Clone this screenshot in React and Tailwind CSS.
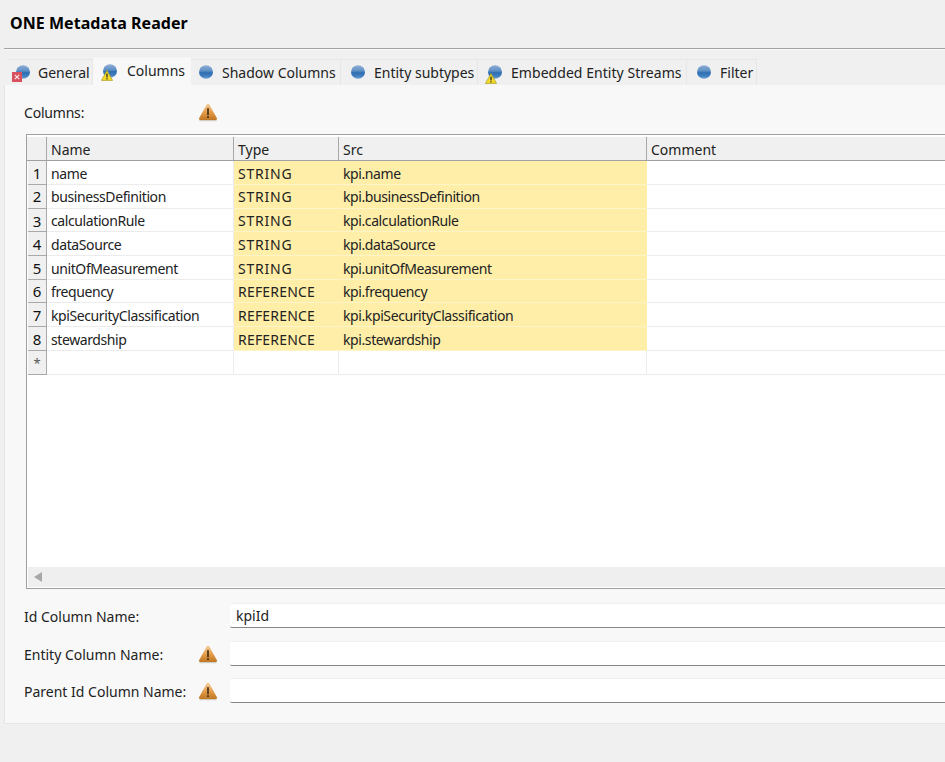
import React from 'react';

function Sphere({ className = '', id }) {
  return (
    <svg width="16" height="16" viewBox="0 0 16 16" className={className}>
      <defs>
        <linearGradient id={id} x1="0" y1="0" x2="0" y2="1">
          <stop offset="0" stopColor="#8fb0d6" />
          <stop offset="0.42" stopColor="#5f8fc4" />
          <stop offset="0.55" stopColor="#2f6fb2" />
          <stop offset="0.8" stopColor="#3f7fc0" />
          <stop offset="1" stopColor="#72a2d4" />
        </linearGradient>
      </defs>
      <ellipse cx="8" cy="8" rx="7" ry="6.7" fill={`url(#${id})`} />
    </svg>
  );
}

function TinyWarn({ className = '' }) {
  return (
    <svg width="12" height="11" viewBox="0 0 12 11" className={className}>
      <path d="M6 0.6 L11.6 10.4 H0.4 Z" fill="#f5dc2a" stroke="#a89a20" strokeWidth="0.7" />
      <rect x="5.4" y="3.6" width="1.2" height="3.8" fill="#222" />
      <rect x="5.4" y="8.2" width="1.2" height="1.2" fill="#222" />
    </svg>
  );
}

function TinyError({ className = '' }) {
  return (
    <svg width="10" height="10" viewBox="0 0 10 10" className={className}>
      <rect width="10" height="10" fill="#d8505e" />
      <path d="M2.8 2.8 L7.2 7.2 M7.2 2.8 L2.8 7.2" stroke="#fbe6e8" strokeWidth="1.2" />
    </svg>
  );
}

function Warn({ id }) {
  return (
    <svg width="20" height="19" viewBox="0 0 20 19" className="block">
      <defs>
        <linearGradient id={id} x1="0" y1="0" x2="0" y2="1">
          <stop offset="0" stopColor="#f4cd96" />
          <stop offset="0.55" stopColor="#e39a48" />
          <stop offset="1" stopColor="#bd7624" />
        </linearGradient>
      </defs>
      <path d="M10 0.8 C10.8 0.8 11.2 1.4 11.6 2.1 L18.8 15 C19.4 16.2 18.8 17 17.6 17 H2.4 C1.2 17 0.6 16.2 1.2 15 L8.4 2.1 C8.8 1.4 9.2 0.8 10 0.8 Z" fill={`url(#${id})`} />
      <rect x="1.5" y="17" width="17" height="1.2" fill="#b8b0a4" opacity="0.6" />
      <rect x="9.2" y="5.2" width="1.6" height="7" fill="#3a2a14" />
      <rect x="9.2" y="13.2" width="1.6" height="1.8" fill="#3a2a14" />
    </svg>
  );
}

const tabs = [
  { label: 'General', w: 'w-[85px] ml-[2px]', text: 'pl-[30px]', sphere: 'left-[7px] top-[4px]', badge: 'error', badgePos: 'left-[4px] top-[12px]' },
  { label: 'Columns', w: 'w-[98px]', text: 'pl-[34px]', sphere: 'left-[9px] top-[5px]', badge: 'warn', badgePos: 'left-[8px] top-[12px]', active: true },
  { label: 'Shadow Columns', w: 'w-[150px]', text: 'pl-[31px]', sphere: 'left-[7px] top-[4px]' },
  { label: 'Entity subtypes', w: 'w-[137px]', text: 'pl-[33px]', sphere: 'left-[9px] top-[4px]' },
  { label: 'Embedded Entity Streams', w: 'w-[209px]', text: 'pl-[33px] tracking-[0.05px]', sphere: 'left-[9px] top-[4px]', badge: 'warn', badgePos: 'left-[7px] top-[13px]' },
  { label: 'Filter', w: 'w-[70px]', text: 'pl-[33px]', sphere: 'left-[9px] top-[4px]' },
];

const rows = [
  ['name', 'STRING', 'kpi.name', 'h-[24px] leading-[25px]', 'tracking-[0.8px]'],
  ['businessDefinition', 'STRING', 'kpi.businessDefinition', 'h-[24px] leading-[23px]', 'tracking-[0.8px]'],
  ['calculationRule', 'STRING', 'kpi.calculationRule', 'h-[23px] leading-[24px]', 'tracking-[0.8px]'],
  ['dataSource', 'STRING', 'kpi.dataSource', 'h-[24px] leading-[25px]', 'tracking-[0.8px]'],
  ['unitOfMeasurement', 'STRING', 'kpi.unitOfMeasurement', 'h-[24px] leading-[25px]', 'tracking-[0.8px]'],
  ['frequency', 'REFERENCE', 'kpi.frequency', 'h-[23px] leading-[23px]', 'tracking-[0.2px]'],
  ['kpiSecurityClassification', 'REFERENCE', 'kpi.kpiSecurityClassification', 'h-[24px] leading-[25px]', 'tracking-[0.2px]'],
  ['stewardship', 'REFERENCE', 'kpi.stewardship', 'h-[24px] leading-[25px]', 'tracking-[0.2px]'],
];

function Tab({ tab, index }) {
  return (
    <div
      className={`relative flex items-center ${tab.w} ${tab.text} ${
        tab.active ? 'h-[28px] bg-[#f8f8f8] border-t border-[#f4f4f4] pb-[3px]' : 'h-[26px] bg-[#f0f0f0] border-t border-r border-[#e6e6e6]'
      }`}
    >
      <Sphere id={`sphere-${index}`} className={`absolute ${tab.sphere}`} />
      {tab.badge === 'error' && <TinyError className={`absolute ${tab.badgePos}`} />}
      {tab.badge === 'warn' && <TinyWarn className={`absolute ${tab.badgePos}`} />}
      <span className="whitespace-nowrap">{tab.label}</span>
    </div>
  );
}

function FormRow({ label, value, warn, id, mb }) {
  return (
    <div className={`flex h-[25px] ${mb}`}>
      <div className="w-[174px] leading-[27px] whitespace-nowrap">{label}</div>
      <div className="w-[32px] pt-[4px]">{warn && <Warn id={id} />}</div>
      <div className="flex-1 h-[25px] bg-white border-t border-t-[#f0f0f0] border-b border-b-[#868686] rounded-l-[2px] pl-[6px] leading-[23px]">{value}</div>
    </div>
  );
}

export default function App() {
  return (
    <div className="relative w-[945px] h-[762px] overflow-hidden bg-[#f0f0f0] text-[14px] text-[#222] font-['Noto_Sans',sans-serif]">
      <div className="h-[48px] pl-[10px] pt-[11px] text-[16px] leading-[24px] font-bold text-black tracking-[0.05px]">ONE Metadata Reader</div>
      <div className="ml-[4px] h-[1px] bg-[#a3a3a3]" />
      <div className="ml-[4px] h-[1px] bg-[#fafafa]" />

      <div className="flex items-end mt-[7px] pl-[6px] h-[28px]">
        {tabs.map((t, i) => (
          <Tab key={t.label} tab={t} index={i} />
        ))}
      </div>

      <div className="ml-[4px] w-[960px] h-[639px] bg-[#f8f8f8] border-l border-b border-[#e6e6e6] pl-[19px]">
        <div className="flex h-[49px]">
          <div className="w-[174px] pt-[18px] leading-[20px] tracking-[-0.2px]">Columns:</div>
          <div className="pt-[18px]"><Warn id="warn-columns" /></div>
        </div>

        <div className="ml-[2px] h-[455px] border border-[#a0a0a0] bg-white flex flex-col">
          <div className="flex h-[24px] mt-[2px] bg-[#f0f0f0] border-b border-[#a0a0a0] leading-[25px]">
            <div className="w-[19px] ml-[1px] border-r border-[#a9a9a9]" />
            <div className="w-[187px] pl-[4px] border-r border-[#a9a9a9]">Name</div>
            <div className="w-[105px] pl-[4px] border-r border-[#a9a9a9]">Type</div>
            <div className="w-[308px] pl-[4px] border-r border-[#a9a9a9]">Src</div>
            <div className="flex-1 pl-[4px]">Comment</div>
          </div>

          {rows.map((r, i) => (
            <div key={r[0]} className={`flex ${r[3]}`}>
              <div className="w-[19px] ml-[1px] bg-[#f0f0f0] border-r border-b border-[#a9a9a9] text-center text-[15px] text-[#111]">{i + 1}</div>
              <div className="w-[187px] pl-[4px] border-r border-b border-[#ececec] whitespace-nowrap tracking-[-0.4px]">{r[0]}</div>
              <div className={`w-[105px] pl-[4px] bg-[#ffeea8] border-b border-[#fff4c8] whitespace-nowrap ${r[4]}`}>{r[1]}</div>
              <div className="w-[308px] pl-[4px] bg-[#ffeea8] border-b border-[#fff4c8] whitespace-nowrap tracking-[-0.4px]">{r[2]}</div>
              <div className="flex-1 border-b border-[#ececec]" />
            </div>
          ))}
          <div className="flex h-[24px] leading-[24px]">
            <div className="w-[19px] ml-[1px] bg-[#f0f0f0] border-r border-b border-[#a9a9a9] text-center text-[13px] text-[#555]">*</div>
            <div className="w-[187px] border-r border-b border-[#ececec]" />
            <div className="w-[105px] border-r border-b border-[#ececec]" />
            <div className="w-[308px] border-r border-b border-[#ececec]" />
            <div className="flex-1 border-b border-[#ececec]" />
          </div>

          <div className="flex-1" />
          <div className="h-[20px] mb-[1px] ml-[1px] bg-[#efefef] flex items-center pl-[6px]">
            <svg width="8" height="10" viewBox="0 0 8 10"><path d="M8 0 V10 L0 5 Z" fill="#a8a8a8" /></svg>
          </div>
        </div>

        <div className="pt-[14px]">
          <FormRow label="Id Column Name:" value="kpiId" id="w0" mb="mb-[13px]" />
          <FormRow label="Entity Column Name:" warn id="w1" mb="mb-[12px]" />
          <FormRow label="Parent Id Column Name:" warn id="w2" />
        </div>
      </div>
    </div>
  );
}
